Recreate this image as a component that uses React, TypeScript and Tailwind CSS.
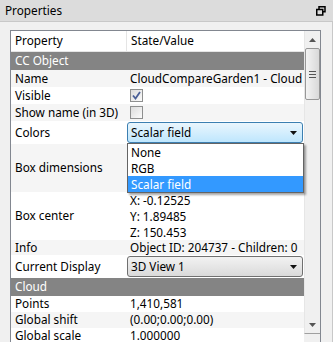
import { ReactNode } from "react";

const font = { fontFamily: '"Noto Sans", "Open Sans", sans-serif' };

function Row({ label, alt, h, children }: { label: string; alt?: boolean; h: string; children?: ReactNode }) {
  return (
    <div className={`flex shrink-0 ${h} ${alt ? "bg-[#f5f5f5]" : "bg-white"} text-black`}>
      <div className="w-[116px] shrink-0 pl-[4px] flex items-center">{label}</div>
      <div className="flex-1 min-w-0 flex items-center">{children}</div>
    </div>
  );
}

function Group({ label }: { label: string }) {
  return <div className="h-[18px] shrink-0 bg-[#848484] text-white pl-[4px] flex items-center">{label}</div>;
}

function Check({ checked }: { checked?: boolean }) {
  return (
    <div className="ml-[3px] w-[13px] h-[13px] border border-[#8e8f8f] bg-gradient-to-br from-[#dcdcdc] to-[#fbfbfb] flex items-center justify-center">
      {checked && (
        <svg width="9" height="9" viewBox="0 0 9 9">
          <path d="M1 4.5 L3.5 7.5 L8 1" fill="none" stroke="#4a5f97" strokeWidth="1.8" />
        </svg>
      )}
    </div>
  );
}

function Arrow() {
  return (
    <svg width="7" height="4" viewBox="0 0 7 4" className="mr-[5px]">
      <path d="M0 0 H7 L3.5 4 Z" fill="#111" />
    </svg>
  );
}

export default function App() {
  return (
    <div className="w-[333px] h-[342px] bg-[#f0f0f0] text-[11.75px] flex flex-col overflow-hidden" style={font}>
      <div className="h-[22px] shrink-0 bg-[#dcdcdc] border-b border-[#c8c8c8] flex items-center justify-between pl-[5px] pr-[7px]">
        <span>Properties</span>
        <svg width="10" height="10" viewBox="0 0 10 10">
          <rect x="3" y="0.75" width="6" height="5" fill="none" stroke="#000" strokeWidth="1.5" />
          <rect x="0.75" y="3.5" width="6" height="5.5" fill="#dcdcdc" stroke="#000" strokeWidth="1.5" />
        </svg>
      </div>
      <div className="flex-1 pt-[8px] pl-[10px] pr-[11px] border-r border-[#c8c8c8]">
        <div className="relative h-[316px] border border-[#828790] bg-white flex overflow-hidden">
          <div className="flex-1 min-w-0 flex flex-col">
            <div className="h-[21px] shrink-0 flex items-center border-b border-[#e5e5e5]">
              <div className="w-[116px] pl-[4px] border-r border-[#e5e5e5] h-full flex items-center">Property</div>
              <div className="pl-[4px]">State/Value</div>
            </div>
            <Group label="CC Object" />
            <Row label="Name" alt h="h-[17px]"><span className="pl-[3px]">CloudCompareGarden1 - Cloud</span></Row>
            <Row label="Visible" h="h-[17px]"><Check checked /></Row>
            <Row label="Show name (in 3D)" alt h="h-[17px]"><Check /></Row>
            <Row label="Colors" h="h-[23px]">
              <div className="w-[176px] h-[21px] rounded-[3px] border border-[#3c7fb1] bg-gradient-to-b from-[#eaf6fd] to-[#bee6fd] flex items-center justify-between pl-[3px]">
                <span>Scalar field</span>
                <Arrow />
              </div>
            </Row>
            <Row label="Box dimensions" alt h="h-[48px]" />
            <Row label="Box center" h="h-[48px]">
              <div className="pl-[3px] leading-[16px]">
                <div>X: -0.12525</div>
                <div>Y: 1.89485</div>
                <div>Z: 150.453</div>
              </div>
            </Row>
            <Row label="Info" alt h="h-[15px]"><span className="pl-[3px]">Object ID: 204737 - Children: 0</span></Row>
            <Row label="Current Display" h="h-[23px]">
              <div className="w-[176px] h-[21px] rounded-[3px] border border-[#707070] bg-gradient-to-b from-[#f2f2f2] to-[#dadada] flex items-center justify-between pl-[3px]">
                <span>3D View 1</span>
                <Arrow />
              </div>
            </Row>
            <Group label="Cloud" />
            <Row label="Points" h="h-[16px]"><span className="pl-[3px]">1,410,581</span></Row>
            <Row label="Global shift" alt h="h-[16px]"><span className="pl-[3px]">(0.00;0.00;0.00)</span></Row>
            <Row label="Global scale" h="h-[16px]"><span className="pl-[3px]">1.000000</span></Row>
          </div>
          <div className="w-[16px] shrink-0 flex flex-col">
            <div className="h-[303px] bg-[#f0f0f0] border-l border-[#e6e6e6] border-b border-b-[#a0a0a0] flex flex-col items-center">
              <div className="h-[17px] w-full flex items-center justify-center">
                <svg width="7" height="4" viewBox="0 0 7 4"><path d="M3.5 0 L7 4 H0 Z" fill="#555" /></svg>
              </div>
              <div className="w-[15px] h-[52px] rounded-[2px] border border-[#979797] bg-gradient-to-r from-[#f3f3f3] to-[#d9d9d9] flex flex-col items-center justify-center gap-[2px]">
                <div className="w-[7px] h-[1px] bg-[#555]" />
                <div className="w-[7px] h-[1px] bg-[#555]" />
                <div className="w-[7px] h-[1px] bg-[#555]" />
              </div>
              <div className="flex-1" />
              <div className="h-[17px] w-full flex items-center justify-center">
                <svg width="7" height="4" viewBox="0 0 7 4"><path d="M0 0 H7 L3.5 4 Z" fill="#555" /></svg>
              </div>
            </div>
            <div className="flex-1 bg-[#f0f0f0]" />
          </div>
          <div className="absolute left-[116px] top-[112px] w-[177px] bg-white border border-[#646464] shadow-[2px_2px_2px_rgba(0,0,0,0.35)] leading-[16px]">
            <div className="pl-[3px]">None</div>
            <div className="pl-[3px]">RGB</div>
            <div className="pl-[3px] bg-[#3399ff] text-white">Scalar field</div>
          </div>
        </div>
      </div>
    </div>
  );
}
